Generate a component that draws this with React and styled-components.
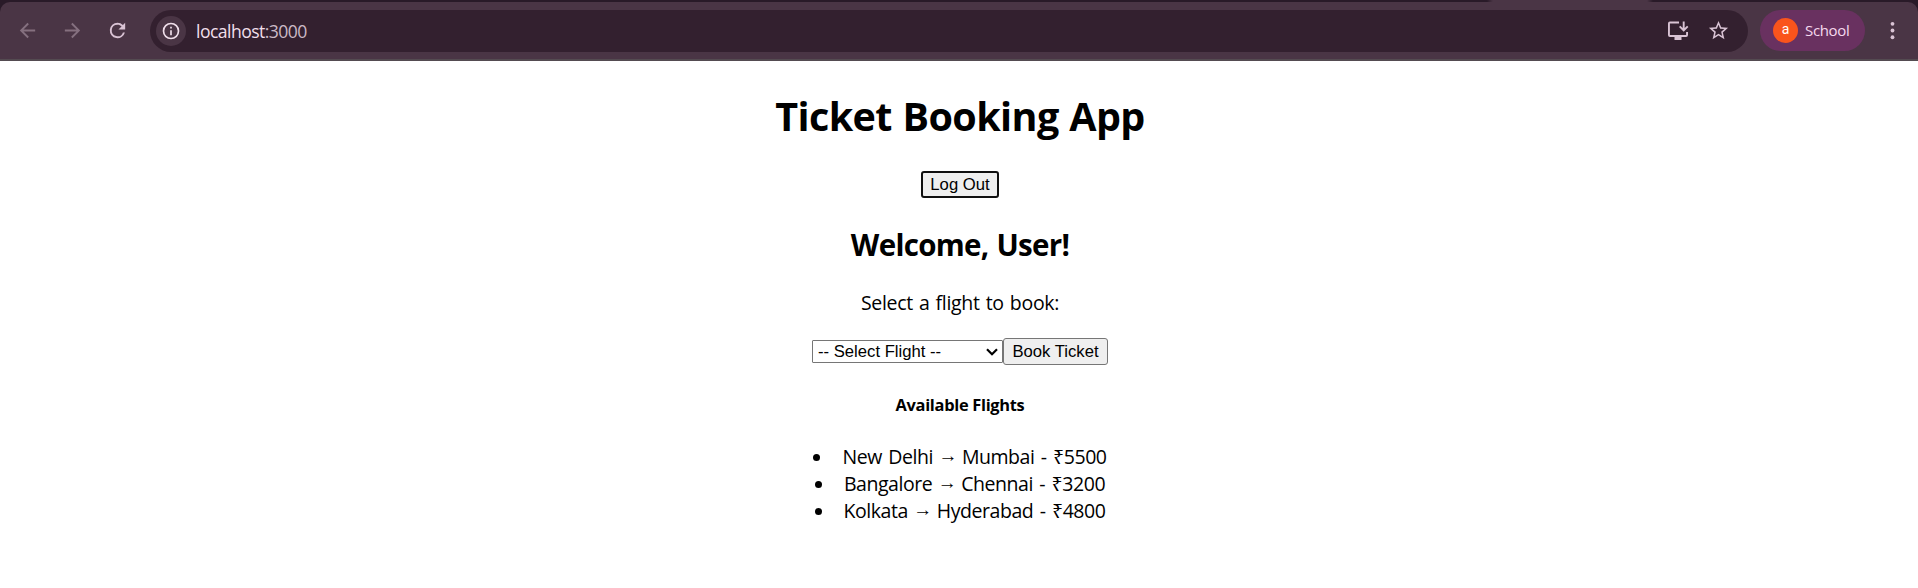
import React from "react";
import styled, { createGlobalStyle } from "styled-components";

const GlobalStyle = createGlobalStyle`
  * { box-sizing: border-box; }
  body { margin: 0; background: #fff; color: #000; overflow: hidden; }
`;

const ui = `"Segoe UI", "Open Sans", "Noto Sans", sans-serif`;
const control = `"Liberation Sans", Arial, sans-serif`;

const Browser = styled.div`
  width: 100%;
  height: 588px;
  font-family: ${ui};
`;

const TabStrip = styled.div`
  height: 61px;
  padding-top: 2px;
  background: linear-gradient(to right, #291a28 1487px, #4a3545 1493px, #4a3545 1647px, #291a28 1653px);
`;

const Toolbar = styled.div`
  height: 59px;
  display: flex;
  align-items: center;
  background: #4a3545;
  border-bottom: 2px solid #544b51;
  border-radius: 10px 10px 0 0;
  padding-left: 16px;
`;

const NavIcon = styled.svg`
  flex: none;
  width: ${(p) => p.$size || 23}px;
  height: ${(p) => p.$size || 23}px;
  margin-right: ${(p) => p.$gap || 0}px;
  fill: ${(p) => p.$color || "#d9c3d4"};
`;

const MenuIcon = styled(NavIcon)`
  margin-left: 16px;
`;

const AddressBar = styled.div`
  width: 1598px;
  height: 42px;
  display: flex;
  align-items: center;
  padding: 0 18px 0 6px;
  background: #33202f;
  border-radius: 21px;
`;

const SiteInfo = styled.div`
  width: 30px;
  height: 30px;
  border-radius: 50%;
  background: #4a3545;
  display: flex;
  align-items: center;
  justify-content: center;
`;

const Url = styled.div`
  flex: 1;
  margin-left: 10px;
  padding-top: 1px;
  font-size: 17.6px;
  letter-spacing: -0.55px;
  line-height: 24px;
  color: #f0dfeb;
  span { color: #cbb9c6; }
`;

const Profile = styled.div`
  width: 105px;
  height: 41px;
  margin-left: 12px;
  padding: 0 0 1px 13px;
  display: flex;
  align-items: center;
  border-radius: 21px;
  background: #693160;
  color: #f5d9ee;
  font-size: 15px;
  line-height: 20px;
  letter-spacing: -0.35px;
`;

const Avatar = styled.div`
  width: 25px;
  height: 25px;
  margin-right: 7px;
  border-radius: 50%;
  background: #fa541c;
  color: #fff;
  font: 14px/23px Roboto, sans-serif;
  text-align: center;
`;

const ProfileName = styled.span`
  margin-bottom: 1px;
`;

const Page = styled.main`
  display: flex;
  flex-direction: column;
  align-items: center;
  padding: 29px 0 0 2px;
`;

const Title = styled.h1`
  margin: 0 0 28px;
  font-size: 39.5px;
  line-height: 53px;
  letter-spacing: -0.6px;
  word-spacing: 1px;
`;

const Button = styled.button`
  width: ${(p) => p.$width}px;
  height: 27px;
  padding: 0;
  font: 16.667px ${control};
  color: #000;
  background: #efefef;
  border: ${(p) => (p.$focused ? "2px solid #101010" : "1px solid #767676")};
  border-radius: 3px;
  white-space: nowrap;
`;

const Welcome = styled.h2`
  margin: 27px 0 24px;
  font-size: 29.5px;
  line-height: 40px;
  letter-spacing: -0.7px;
  word-spacing: 1px;
`;

const Prompt = styled.p`
  margin: 0 0 22px;
  font-size: 19.5px;
  line-height: 27px;
  letter-spacing: -0.3px;
  word-spacing: 1.3px;
`;

const BookingRow = styled.div`
  display: flex;
  align-items: center;
`;

const Select = styled.div`
  width: 191px;
  height: 23px;
  display: flex;
  align-items: center;
  justify-content: space-between;
  padding: 0 4px 0 5px;
  border: 1px solid #767676;
  border-radius: 1px;
  font: 16.667px/21px ${control};
`;

const Subheading = styled.h5`
  margin: 29px 0 27px;
  font-size: 16.4px;
  line-height: 22px;
  letter-spacing: -0.3px;
`;

const FlightList = styled.ul`
  margin: 0;
  padding: 0;
  list-style: none;
  display: flex;
  flex-direction: column;
  align-items: center;
`;

const Flight = styled.li`
  display: flex;
  align-items: center;
  height: 27px;
  font-size: 19.5px;
  line-height: 27px;
  white-space: pre;
  letter-spacing: -0.45px;
  word-spacing: 1.8px;
  &::before {
    content: "";
    width: 7px;
    height: 7px;
    margin: 2px 22px 0 0;
    border-radius: 50%;
    background: #000;
  }
`;

const Arrow = styled.span`
  display: flex;
  justify-content: center;
  width: 14px;
  margin: 0 7px 3px 8px;
  font-size: 19px;
  line-height: 22px;
  letter-spacing: 0;
`;

const flights = [
  { from: "New Delhi", to: "Mumbai", price: 5500 },
  { from: "Bangalore", to: "Chennai", price: 3200 },
  { from: "Kolkata", to: "Hyderabad", price: 4800 },
];

export default function App() {
  return (
    <Browser>
      <GlobalStyle />
      <TabStrip>
        <Toolbar>
          <NavIcon viewBox="0 0 24 24" $color="#85707f" $gap={22}>
            <path d="M20 11H7.83l5.59-5.59L12 4l-8 8 8 8 1.41-1.41L7.83 13H20v-2z" />
          </NavIcon>
          <NavIcon viewBox="0 0 24 24" $color="#85707f" $gap={22}>
            <path d="M12 4l-1.41 1.41L16.17 11H4v2h12.17l-5.58 5.59L12 20l8-8z" />
          </NavIcon>
          <NavIcon viewBox="0 0 24 24" $gap={21}>
            <path d="M17.65 6.35A7.96 7.96 0 0 0 12 4a8 8 0 1 0 7.73 10h-2.08A6 6 0 1 1 12 6c1.66 0 3.14.69 4.22 1.78L13 11h7V4z" />
          </NavIcon>
          <AddressBar>
            <SiteInfo>
              <NavIcon viewBox="0 0 24 24" $size={20} $color="#f0dfeb">
                <path d="M11 7h2v2h-2zm0 4h2v6h-2zm1-9a10 10 0 1 0 0 20 10 10 0 0 0 0-20m0 18a8 8 0 1 1 0-16 8 8 0 0 1 0 16" />
              </NavIcon>
            </SiteInfo>
            <Url>localhost<span>:3000</span></Url>
            <NavIcon viewBox="0 0 23 23" $gap={18}>
              <path d="M13 2.500v1.900H3.900v11.700h16.200V13H22v3.100a1.900 1.900 0 0 1-1.900 1.900h-4.600v3h-7v-3H3.900A1.900 1.900 0 0 1 2 16.100V4.400A1.900 1.900 0 0 1 3.900 2.500zM17.700 12.700l-4.700-4.700 1.300-1.300 2.450 2.400V2.500h1.900v6.600l2.450-2.400 1.300 1.300z" />
            </NavIcon>
            <NavIcon viewBox="0 0 24 24">
              <path d="M22 9.24l-7.19-.62L12 2 9.19 8.63 2 9.24l5.46 4.73L5.82 21 12 17.27 18.18 21l-1.63-7.03zM12 15.4l-3.76 2.27 1-4.28-3.32-2.88 4.38-.38L12 6.1l1.71 4.04 4.38.38-3.32 2.88 1 4.28z" />
            </NavIcon>
          </AddressBar>
          <Profile>
            <Avatar>a</Avatar>
            <ProfileName>School</ProfileName>
          </Profile>
          <MenuIcon viewBox="0 0 24 24" $size={23}>
            <circle cx="12" cy="5" r="2" />
            <circle cx="12" cy="12" r="2" />
            <circle cx="12" cy="19" r="2" />
          </MenuIcon>
        </Toolbar>
      </TabStrip>
      <Page>
        <Title>Ticket Booking App</Title>
        <Button $width={78} $focused>Log Out</Button>
        <Welcome>Welcome, User!</Welcome>
        <Prompt>Select a flight to book:</Prompt>
        <BookingRow>
          <Select>
            -- Select Flight --
            <svg width="12" height="8" viewBox="0 0 12 8" fill="none" stroke="#000" strokeWidth="2.2">
              <path d="M1 1.2l5 5 5-5" />
            </svg>
          </Select>
          <Button $width={105}>Book Ticket</Button>
        </BookingRow>
        <Subheading>Available Flights</Subheading>
        <FlightList>
          {flights.map((f) => (
            <Flight key={f.from}>
              <span>{f.from}</span>
              <Arrow>→</Arrow>
              <span>{`${f.to} - ₹${f.price}`}</span>
            </Flight>
          ))}
        </FlightList>
      </Page>
    </Browser>
  );
}
